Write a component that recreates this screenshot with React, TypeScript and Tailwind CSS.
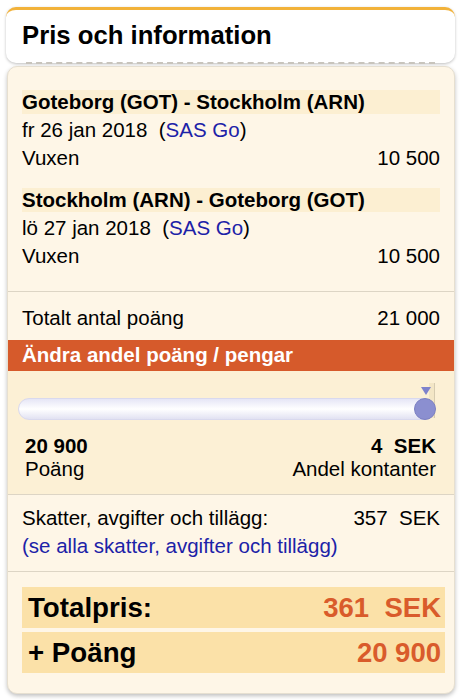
import React from 'react';

const legs = [
  { route: 'Goteborg (GOT) - Stockholm (ARN)', date: 'fr 26 jan 2018', points: '10 500' },
  { route: 'Stockholm (ARN) - Goteborg (GOT)', date: 'lö 27 jan 2018', points: '10 500' },
];

const App: React.FC = () => {
  return (
    <div className="w-[460px] h-[700px] bg-white pt-[7px] font-['Liberation_Sans',Arial,sans-serif] text-black">
      {/* Header */}
      <div className="mx-[6px] w-[449px] h-[56px] rounded-[10px] bg-white border-t-[3px] border-[#f2b23a] shadow-[0_1px_3px_rgba(0,0,0,0.25)] flex flex-col justify-between">
        <h1 className="pl-[16px] pt-[10px] text-[25.7px] font-bold leading-[30px]">Pris och information</h1>
        <div className="mx-[20px] border-b-2 border-dashed border-[#c8c4bc] translate-y-[1px]" />
      </div>

      {/* Body */}
      <div className="mt-[3px] mx-[7px] w-[448px] h-[628px] rounded-[10px] bg-[#fef6e7] border border-[#e6dfd0] shadow-[0_2px_4px_rgba(0,0,0,0.25)] overflow-hidden flex flex-col">
        {/* Flights */}
        <div className="px-[14px] pt-[23px] pb-[21px] flex flex-col gap-[16px] text-[20.5px]">
          {legs.map((leg) => (
            <div key={leg.route}>
              <div className="h-[24px] bg-[#fcefd2] font-bold flex items-center">{leg.route}</div>
              <div className="mt-[2px] h-[28px] flex items-center">
                {leg.date}&nbsp;&nbsp;(<span className="text-[#1c22a8]">SAS Go</span>)
              </div>
              <div className="h-[28px] flex items-center justify-between">
                <span>Vuxen</span>
                <span>{leg.points}</span>
              </div>
            </div>
          ))}
        </div>

        <div className="border-t border-[#ddd5c5]" />

        {/* Total points */}
        <div className="h-[48px] px-[14px] pt-[4px] flex items-center justify-between text-[20.5px]">
          <span>Totalt antal poäng</span>
          <span>21 000</span>
        </div>

        {/* Change share */}
        <div className="h-[31px] bg-[#d65a2b] px-[14px] flex items-center text-white text-[20.5px] font-bold">
          Ändra andel poäng / pengar
        </div>

        <div className="bg-[#fcf0d5] px-[10px] pt-[12px] pb-[14px]">
          {/* Slider */}
          <div className="relative h-[37px] mr-[10px]">
            <div className="absolute right-[-1px] top-0 h-[35px] w-[6px] border-r border-[#d6cbb0] bg-[#f3e6c6]" />
            <div className="absolute left-0 right-[1px] top-[15px] h-[22px] rounded-full border border-[#d9d9ee] bg-gradient-to-b from-[#e6e6f6] via-white to-[#e2e2f2]" />
            <div className="absolute right-[3px] top-[4px] w-0 h-0 border-l-[5px] border-r-[5px] border-t-[8px] border-l-transparent border-r-transparent border-t-[#7e82cc]" />
            <div className="absolute right-[-2px] top-[15px] w-[22px] h-[22px] rounded-full bg-[#8b8fd0] border border-[#7c80c2]" />
          </div>

          <div className="mt-[14px] px-[7px] pr-[8px] flex justify-between text-[20.5px] leading-[23px]">
            <div className="flex flex-col">
              <span className="font-bold">20 900</span>
              <span>Poäng</span>
            </div>
            <div className="flex flex-col items-end">
              <span className="font-bold">4&nbsp;&nbsp;SEK</span>
              <span>Andel kontanter</span>
            </div>
          </div>
        </div>

        <div className="border-t border-[#ddd5c5]" />

        {/* Taxes */}
        <div className="h-[76px] px-[14px] pt-[9px] text-[20.5px] leading-[28px]">
          <div className="flex justify-between">
            <span>Skatter, avgifter och tillägg:</span>
            <span>357&nbsp;&nbsp;SEK</span>
          </div>
          <a className="text-[#1c22a8] cursor-pointer">(se alla skatter, avgifter och tillägg)</a>
        </div>

        <div className="border-t border-[#ddd5c5]" />

        {/* Totals */}
        <div className="pt-[15px] pl-[14px] pr-[9px] flex flex-col gap-[4px] font-bold">
          <div className="h-[41px] bg-[#fbe1a8] pl-[6px] pr-[4px] flex items-center justify-between">
            <span className="text-[27.7px]">Totalpris:</span>
            <span className="text-[27.5px] text-[#d95b2b]">361&nbsp;&nbsp;SEK</span>
          </div>
          <div className="h-[41px] bg-[#fbe1a8] pl-[6px] pr-[4px] flex items-center justify-between">
            <span className="text-[27.7px]">+ Poäng</span>
            <span className="text-[27.5px] text-[#d95b2b]">20 900</span>
          </div>
        </div>
      </div>
    </div>
  );
};

export default App;
